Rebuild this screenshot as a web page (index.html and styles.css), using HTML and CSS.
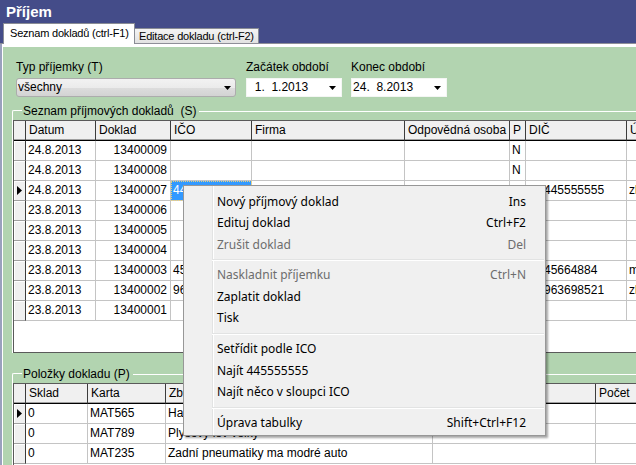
FILE: index.html
```html
<!DOCTYPE html>
<html lang="cs">
<head>
<meta charset="utf-8">
<title>Příjem</title>
<link rel="stylesheet" href="styles.css">
</head>
<body>
<div class="window">
  <header class="titlebar">Příjem</header>
  <nav class="tabs">
    <div class="tab active">Seznam dokladů (ctrl-F1)</div>
    <div class="tab inactive">Editace dokladu (ctrl-F2)</div>
  </nav>
  <div class="frame">
    <div class="strip"></div>
    <main class="content">
      <section class="filters">
        <div class="field field-type">
          <label>Typ příjemky (T)</label>
          <div class="combo"><span>všechny</span><svg class="arrow" width="7" height="4" viewBox="0 0 7 4"><path d="M0 0H7L3.5 4Z"/></svg></div>
        </div>
        <div class="field field-from">
          <label>Začátek období</label>
          <div class="date"><span class="txt"><span class="day">1</span>.  1.2013</span><svg class="arrow" width="7" height="4" viewBox="0 0 7 4"><path d="M0 0H7L3.5 4Z"/></svg></div>
        </div>
        <div class="field field-to">
          <label>Konec období</label>
          <div class="date"><span class="txt"><span class="day">24</span>.  8.2013</span><svg class="arrow" width="7" height="4" viewBox="0 0 7 4"><path d="M0 0H7L3.5 4Z"/></svg></div>
        </div>
      </section>

      <section class="group group-docs">
        <div class="group-head"><span class="group-title">Seznam příjmových dokladů  (S)</span></div>
        <div class="group-body">
          <div class="grid grid-docs">
            <div class="row head">
              <div class="cell ind"></div>
              <div class="cell c-datum">Datum</div>
              <div class="cell c-doklad">Doklad</div>
              <div class="cell c-ico">IČO</div>
              <div class="cell c-firma">Firma</div>
              <div class="cell c-odp">Odpovědná osoba</div>
              <div class="cell c-p">P</div>
              <div class="cell c-dic">DIČ</div>
              <div class="cell c-u">Ú</div>
            </div>
            <div class="row">
              <div class="cell ind"></div>
              <div class="cell c-datum">24.8.2013</div>
              <div class="cell c-doklad num">13400009</div>
              <div class="cell c-ico"></div>
              <div class="cell c-firma"></div>
              <div class="cell c-odp"></div>
              <div class="cell c-p">N</div>
              <div class="cell c-dic"></div>
              <div class="cell c-u"></div>
            </div>
            <div class="row">
              <div class="cell ind"></div>
              <div class="cell c-datum">24.8.2013</div>
              <div class="cell c-doklad num">13400008</div>
              <div class="cell c-ico"></div>
              <div class="cell c-firma"></div>
              <div class="cell c-odp"></div>
              <div class="cell c-p">N</div>
              <div class="cell c-dic"></div>
              <div class="cell c-u"></div>
            </div>
            <div class="row">
              <div class="cell ind"><svg width="5" height="9" viewBox="0 0 5 9"><path d="M0 0L5 4.5L0 9Z"/></svg></div>
              <div class="cell c-datum">24.8.2013</div>
              <div class="cell c-doklad num">13400007</div>
              <div class="cell c-ico sel">445555555</div>
              <div class="cell c-firma"></div>
              <div class="cell c-odp"></div>
              <div class="cell c-p"></div>
              <div class="cell c-dic">CZ445555555</div>
              <div class="cell c-u">zlínský</div>
            </div>
            <div class="row">
              <div class="cell ind"></div>
              <div class="cell c-datum">23.8.2013</div>
              <div class="cell c-doklad num">13400006</div>
              <div class="cell c-ico"></div>
              <div class="cell c-firma"></div>
              <div class="cell c-odp"></div>
              <div class="cell c-p"></div>
              <div class="cell c-dic"></div>
              <div class="cell c-u"></div>
            </div>
            <div class="row">
              <div class="cell ind"></div>
              <div class="cell c-datum">23.8.2013</div>
              <div class="cell c-doklad num">13400005</div>
              <div class="cell c-ico"></div>
              <div class="cell c-firma"></div>
              <div class="cell c-odp"></div>
              <div class="cell c-p"></div>
              <div class="cell c-dic"></div>
              <div class="cell c-u"></div>
            </div>
            <div class="row">
              <div class="cell ind"></div>
              <div class="cell c-datum">23.8.2013</div>
              <div class="cell c-doklad num">13400004</div>
              <div class="cell c-ico"></div>
              <div class="cell c-firma"></div>
              <div class="cell c-odp"></div>
              <div class="cell c-p"></div>
              <div class="cell c-dic"></div>
              <div class="cell c-u"></div>
            </div>
            <div class="row">
              <div class="cell ind"></div>
              <div class="cell c-datum">23.8.2013</div>
              <div class="cell c-doklad num">13400003</div>
              <div class="cell c-ico">45664884</div>
              <div class="cell c-firma"></div>
              <div class="cell c-odp"></div>
              <div class="cell c-p"></div>
              <div class="cell c-dic">CZ45664884</div>
              <div class="cell c-u">moravský</div>
            </div>
            <div class="row">
              <div class="cell ind"></div>
              <div class="cell c-datum">23.8.2013</div>
              <div class="cell c-doklad num">13400002</div>
              <div class="cell c-ico">963698521</div>
              <div class="cell c-firma"></div>
              <div class="cell c-odp"></div>
              <div class="cell c-p"></div>
              <div class="cell c-dic">CZ963698521</div>
              <div class="cell c-u">zlínský</div>
            </div>
            <div class="row">
              <div class="cell ind"></div>
              <div class="cell c-datum">23.8.2013</div>
              <div class="cell c-doklad num">13400001</div>
              <div class="cell c-ico"></div>
              <div class="cell c-firma"></div>
              <div class="cell c-odp"></div>
              <div class="cell c-p"></div>
              <div class="cell c-dic"></div>
              <div class="cell c-u"></div>
            </div>
          </div>
        </div>
      </section>

      <section class="group group-items">
        <div class="group-head"><span class="group-title">Položky dokladu (P)</span></div>
        <div class="group-body">
          <div class="grid grid-items">
            <div class="row head">
              <div class="cell ind"></div>
              <div class="cell c-sklad">Sklad</div>
              <div class="cell c-karta">Karta</div>
              <div class="cell c-zbozi">Zboží</div>
              <div class="cell c-pozn">Poznámka</div>
              <div class="cell c-pocet">Počet</div>
            </div>
            <div class="row">
              <div class="cell ind"><svg width="5" height="9" viewBox="0 0 5 9"><path d="M0 0L5 4.5L0 9Z"/></svg></div>
              <div class="cell c-sklad">0</div>
              <div class="cell c-karta">MAT565</div>
              <div class="cell c-zbozi">Halogenová žárovka</div>
              <div class="cell c-pozn"></div>
              <div class="cell c-pocet"></div>
            </div>
            <div class="row">
              <div class="cell ind"></div>
              <div class="cell c-sklad">0</div>
              <div class="cell c-karta">MAT789</div>
              <div class="cell c-zbozi">Plyšový lev velký</div>
              <div class="cell c-pozn"></div>
              <div class="cell c-pocet"></div>
            </div>
            <div class="row">
              <div class="cell ind"></div>
              <div class="cell c-sklad">0</div>
              <div class="cell c-karta">MAT235</div>
              <div class="cell c-zbozi">Zadní pneumatiky ma modré auto</div>
              <div class="cell c-pozn"></div>
              <div class="cell c-pocet"></div>
            </div>
          </div>
        </div>
      </section>
    </main>
  </div>

  <div class="menu">
    <div class="mi"><span>Nový příjmový doklad</span><span>Ins</span></div>
    <div class="mi"><span>Edituj doklad</span><span>Ctrl+F2</span></div>
    <div class="mi dis"><span>Zrušit doklad</span><span>Del</span></div>
    <div class="sep"></div>
    <div class="mi dis"><span>Naskladnit příjemku</span><span>Ctrl+N</span></div>
    <div class="mi"><span>Zaplatit doklad</span></div>
    <div class="mi"><span>Tisk</span></div>
    <div class="sep"></div>
    <div class="mi"><span>Setřídit podle ICO</span></div>
    <div class="mi"><span>Najít 445555555</span></div>
    <div class="mi"><span>Najít něco v sloupci ICO</span></div>
    <div class="sep"></div>
    <div class="mi"><span>Úprava tabulky</span><span>Shift+Ctrl+F12</span></div>
  </div>
</div>
</body>
</html>
```

FILE: styles.css
```css
* { box-sizing: border-box; }
html, body { margin: 0; padding: 0; }
body {
  width: 636px;
  height: 465px;
  overflow: hidden;
  font-family: "Liberation Sans", Arial, sans-serif;
  font-size: 12px;
  color: #000;
  background: #b2d4b0;
}
.window {
  position: relative;
  width: 636px;
  height: 465px;
  overflow: hidden;
  display: flex;
  flex-direction: column;
}
.titlebar {
  flex: none;
  height: 23px;
  background: #444c89;
  color: #fff;
  font-weight: bold;
  font-size: 15px;
  line-height: 23px;
  padding-left: 6px;
}
.tabs {
  flex: none;
  height: 21px;
  background: #444c89;
  border-bottom: 1px solid #8e8f98;
  display: flex;
  align-items: flex-end;
  padding-left: 3px;
}
.tab {
  font-size: 11px;
  letter-spacing: -0.2px;
  white-space: nowrap;
  border: 1px solid #898c95;
  border-bottom: none;
}
.tab.active {
  position: relative;
  z-index: 1;
  width: 132px;
  height: 21px;
  margin-bottom: -1px;
  background: #fff;
  padding: 3px 0 0 6px;
  line-height: 13px;
}
.tab.inactive {
  width: 125px;
  height: 15px;
  margin-left: -1px;
  background: linear-gradient(#f4f4f4, #e2e2e2);
  padding-left: 4px;
  line-height: 14px;
}
.frame {
  flex: 1;
  display: flex;
  flex-direction: column;
  border-left: 2px solid #9aa1bd;
  min-height: 0;
}
.strip {
  flex: none;
  height: 3px;
  background: #fff;
}
.content {
  flex: 1;
  background: #b2d4b0;
  box-shadow: inset 1px 0 0 #fff;
  overflow: hidden;
}

/* filters */
.filters {
  display: flex;
  padding: 13px 0 0 14px;
}
.field {
  display: flex;
  flex-direction: column;
  gap: 4px;
}
.field label {
  height: 14px;
  line-height: 14px;
  white-space: nowrap;
}
.field-type { width: 230px; }
.field-from { width: 105px; }
.field-to { width: 96px; }
.combo, .date {
  height: 19px;
  display: flex;
  align-items: center;
  justify-content: space-between;
  line-height: 17px;
}
.combo {
  width: 220px;
  border: 1px solid #acacac;
  border-radius: 3px;
  background: linear-gradient(#f2f2f2, #ebebeb 50%, #dddddd 50%, #d3d3d3);
  padding: 0 4px 0 1px;
}
.date {
  width: 96px;
  border: 1px solid #f4f6f4;
  background: #fff;
  padding: 0 5px 0 1px;
}
.date .txt { white-space: pre; }
.date .day {
  display: inline-block;
  width: 13.4px;
  text-align: right;
}
.arrow { display: block; flex: none; margin-top: 1px; }

/* group boxes */
.group { margin-left: 10px; }
.group-docs { margin-top: 6px; }
.group-items { margin-top: 13px; }
.group-head {
  height: 17px;
  display: flex;
  align-items: center;
}
.group-head::before {
  content: "";
  align-self: flex-end;
  width: 9px;
  height: 9px;
  border-top: 1px solid #fff;
  border-left: 1px solid #fff;
  border-top-left-radius: 2px;
}
.group-head::after {
  content: "";
  flex: 1;
  height: 1px;
  background: #fff;
  margin-left: 3px;
}
.group-title {
  white-space: pre;
  line-height: 17px;
  padding-left: 1px;
}
.group-body {
  border-left: 1px solid #fff;
}

/* grids */
.grid {
  width: 720px;
  background: #fff;
  border: 1px solid #5a5a5a;
  overflow: hidden;
}
.grid-docs { height: 233px; }
.grid-items { height: 100px; }
.row {
  display: flex;
  height: 20px;
}
.cell {
  flex: none;
  height: 20px;
  border-right: 1px solid #c4c4c4;
  border-bottom: 1px solid #c4c4c4;
  padding: 0 2px;
  line-height: 19px;
  white-space: nowrap;
  overflow: hidden;
}
.cell.num { text-align: right; padding-right: 3px; }
.row.head .cell {
  background: #f0f0f0;
  border-right: 1px solid #3c3c3c;
  border-bottom: 1px solid #000;
  box-shadow: inset 0 -1px 0 #a0a0a0;
  padding-left: 3px;
}
.cell.ind {
  background: #f0f0f0;
  border-right: 1px solid #3c3c3c;
  border-bottom: 1px solid #a0a0a0;
  box-shadow: inset 1px 1px 0 #fff;
  display: flex;
  align-items: center;
  justify-content: center;
  padding: 0;
}
.cell.sel {
  background: #3399ff;
  color: #fff;
  outline: 1px dotted #e9d27a;
  outline-offset: -1px;
}
.ind { width: 12px; }
.c-datum { width: 70px; }
.c-doklad { width: 75px; }
.c-ico { width: 81px; }
.c-firma { width: 153px; }
.c-odp { width: 105px; }
.c-p { width: 16px; }
.c-dic { width: 101px; }
.c-u { width: 80px; }
.c-sklad { width: 62px; }
.c-karta { width: 78px; }
.c-zbozi { width: 267px; }
.c-pozn { width: 163px; }
.c-pocet { width: 80px; }

/* context menu */
.menu {
  position: absolute;
  left: 183px;
  top: 185px;
  width: 363px;
  padding: 4.5px 0 1.5px;
  border: 1px solid #979797;
  background-color: #f0f0f0;
  background-image: linear-gradient(to right, transparent 28px, #e2e3e3 28px, #e2e3e3 29px, #fff 29px, #fff 30px, transparent 30px);
  box-shadow: 2px 2px 2px rgba(0, 0, 0, 0.35);
  font-family: "Noto Sans", "Open Sans", sans-serif;
  font-size: 12px;
  z-index: 5;
}
.mi {
  height: 21.5px;
  line-height: 21.5px;
  display: flex;
  justify-content: space-between;
  padding: 0 19px 0 33px;
  white-space: nowrap;
}
.mi.dis { color: #6d6d6d; }
.sep {
  height: 9.33px;
  margin: 0 1px 0 28px;
  background: linear-gradient(transparent 4px, #e2e3e3 4px, #e2e3e3 5px, #fff 5px, #fff 6px, transparent 6px);
}
```
